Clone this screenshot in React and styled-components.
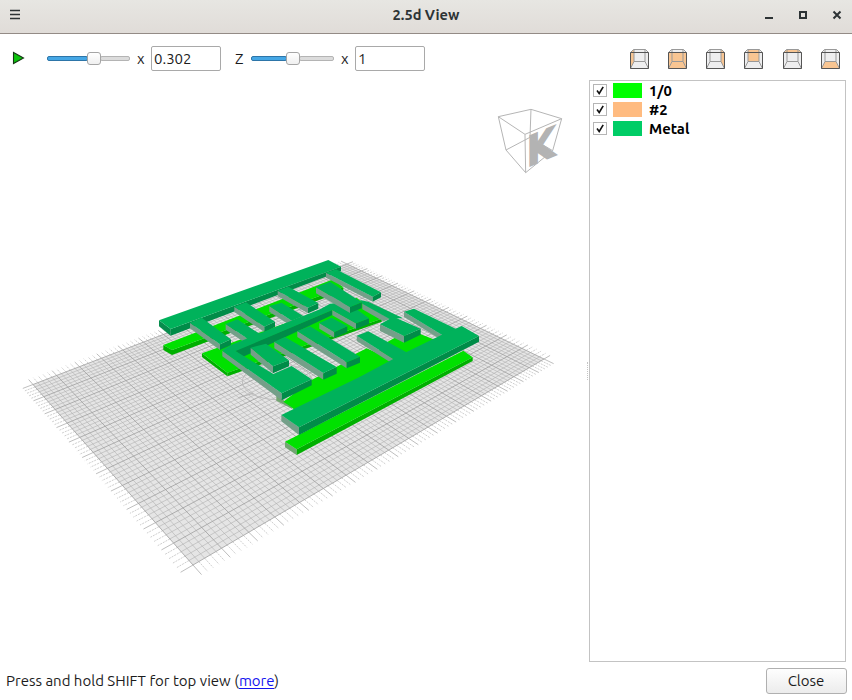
import React from "react";
import styled, { createGlobalStyle } from "styled-components";

const GlobalStyle = createGlobalStyle`
  * { box-sizing: border-box; }
  body { margin: 0; background: #fff; }
`;

const Window = styled.div`
  width: 852px;
  height: 700px;
  display: flex;
  flex-direction: column;
  background: #fff;
  color: #1c1c1c;
  font: 15px/20px Ubuntu, "Noto Sans", sans-serif;
  overflow: hidden;
`;

const TitleBar = styled.header`
  height: 34px;
  flex: none;
  display: grid;
  grid-template-columns: 120px 1fr 120px;
  align-items: center;
  padding: 0 9px 3px;
  background: linear-gradient(#e7e6e2, #e0dcd8);
  border-bottom: 1px solid #938b86;
`;

const Title = styled.h1`
  margin: 0;
  text-align: center;
  font-size: 14.6px;
  line-height: 20px;
  font-weight: 600;
  color: #2d3335;
`;

const WindowButtons = styled.div`
  display: flex;
  justify-content: flex-end;
  gap: 22px;
`;

const Glyph = styled.svg`
  display: block;
  flex: none;
`;

const Toolbar = styled.div`
  height: 46px;
  flex: none;
  display: flex;
  align-items: center;
  padding: 2px 11px 0 12px;
`;

const Slider = styled.div`
  width: 83px;
  height: 14px;
  display: flex;
  align-items: center;
  margin-left: ${(p) => p.$gap}px;
`;

const Track = styled.div`
  height: 5px;
  border: 1px solid ${(p) => (p.$filled ? "#2d75a8" : "#b4b4b4")};
  background: ${(p) => (p.$filled ? "#45a7e5" : "#dcdcdc")};
  border-radius: 2px;
  ${(p) => (p.$filled ? `width: ${p.$size}px;` : "flex: 1;")}
`;

const Knob = styled.div`
  width: 14px;
  height: 13px;
  margin: 0 -1px;
  border: 1px solid #a5a5a5;
  border-radius: 3px;
  background: linear-gradient(#fff, #f0f0f0);
  z-index: 1;
`;

const Label = styled.span`
  margin-left: ${(p) => p.$gap}px;
  width: ${(p) => p.$size}px;
  padding-top: 1px;
`;

const Field = styled.input`
  width: 70px;
  height: 25px;
  padding: 1px 2px 0;
  border: 1px solid #a9a9a9;
  border-radius: 2px;
  background: #fff;
  font: 15px/20px Ubuntu, "Noto Sans", sans-serif;
  color: #1c1c1c;
  outline: none;
`;

const ViewButtons = styled.div`
  display: flex;
  gap: 18.3px;
  margin-left: auto;
  padding-top: 2px;
`;

const Body = styled.main`
  flex: 1;
  min-height: 0;
  display: flex;
`;

const Splitter = styled.div`
  width: 3px;
  display: flex;
  align-items: center;
  padding-left: 1px;
  &::before {
    content: "";
    height: 18px;
    border-left: 1px dotted #c4c4c4;
  }
`;

const LayerList = styled.ul`
  width: 257px;
  margin: 0;
  padding: 0 3px;
  list-style: none;
  border: 1px solid #c3c3c3;
`;

const LayerRow = styled.li`
  height: 19px;
  display: flex;
  align-items: center;
  font-size: 14.8px;
  line-height: 19px;
  font-weight: 700;
  color: #000;
`;

const Check = styled.span`
  width: 14px;
  height: 13px;
  border: 1px solid #b5b5b5;
  background: #fff;
`;

const Swatch = styled.span`
  width: 29px;
  height: 15px;
  margin: 0 7px 0 6px;
  background: ${(p) => p.$color};
`;

const Footer = styled.footer`
  height: 38px;
  flex: none;
  display: flex;
  align-items: center;
  justify-content: space-between;
  padding: 0 5px 0 6px;
`;

const Hint = styled.span`
  a { color: #1414ef; text-underline-offset: 2px; text-decoration-thickness: 1px; }
`;

const CloseButton = styled.button`
  width: 81px;
  height: 26px;
  padding: 0 1px 0 0;
  border: 1px solid #b0b0b0;
  border-radius: 3px;
  background: linear-gradient(#fefefe, #ececec);
  font: 15px/20px Ubuntu, "Noto Sans", sans-serif;
  color: #1c1c1c;
`;

/* Faces of the small cube icons */
const FACES = {
  left: "0.5,3.5 4,0.5 4,12.5 0.5,19.5",
  front: "0.5,3.5 18.5,3.5 18.5,19.5 0.5,19.5",
  right: "18.5,3.5 15,0.5 15,12.5 18.5,19.5",
  back: "4,0.5 15,0.5 15,12.5 4,12.5",
  top: "0.5,3.5 4,0.5 15,0.5 18.5,3.5",
  bottom: "0.5,19.5 4,12.5 15,12.5 18.5,19.5",
};

function CubeIcon({ face }) {
  return (
    <Glyph width="20" height="21" viewBox="0 0 20 21">
      <path d="M.5 3.5 3.5.5h12l3 3v16H.5z" fill="#eeeeef" />
      <polygon points={FACES[face]} fill="#f8c592" />
      <path d="M.5 3.5 3.5.5h12l3 3M4 .5v12h11V.5M4 12.5l-3.5 7M15 12.5l3.5 7" fill="none" stroke="#999" />
      <path d="M.5 3.5h18v16H.5z" fill="none" stroke="#555" />
    </Glyph>
  );
}

/* Perspective map of the unit square onto the ground plane */
const CORNERS = [[33, 384.5], [347, 264], [544, 359], [193, 565]];
const project = (() => {
  const [[x0, y0], [x1, y1], [x2, y2], [x3, y3]] = CORNERS;
  const dx1 = x1 - x2, dx2 = x3 - x2, sx = x0 - x1 + x2 - x3;
  const dy1 = y1 - y2, dy2 = y3 - y2, sy = y0 - y1 + y2 - y3;
  const det = dx1 * dy2 - dx2 * dy1;
  const g = (sx * dy2 - dx2 * sy) / det;
  const h = (dx1 * sy - sx * dy1) / det;
  return (u, v) => {
    const w = g * u + h * v + 1;
    return [
      ((x1 - x0 + g * x1) * u + (x3 - x0 + h * x3) * v + x0) / w,
      ((y1 - y0 + g * y1) * u + (y3 - y0 + h * y3) * v + y0) / w,
    ];
  };
})();

const COLS = 85;
const ROWS = 55;
const segment = (a, b) => `M${project(...a).map((n) => n.toFixed(2))}L${project(...b).map((n) => n.toFixed(2))}`;

function gridPaths() {
  const out = { minor: "", major: "", minorTick: "", majorTick: "" };
  const ou = 2.1 / COLS;
  const ov = 2.1 / ROWS;
  for (let i = 0; i <= COLS; i++) {
    const u = i / COLS;
    const kind = i % 5 ? "minor" : "major";
    out[kind] += segment([u, 0], [u, 1]);
    out[kind + "Tick"] += segment([u, 0], [u, -ov]) + segment([u, 1], [u, 1 + ov]);
  }
  for (let j = 0; j <= ROWS; j++) {
    const v = j / ROWS;
    const kind = j % 5 ? "minor" : "major";
    out[kind] += segment([0, v], [1, v]);
    out[kind + "Tick"] += segment([0, v], [-ou, v]) + segment([1, v], [1 + ou, v]);
  }
  return out;
}
const GRID = gridPaths();

function Ground() {
  return (
    <g fill="none">
      <polygon points={CORNERS.join(" ")} fill="#e5e5e5" />
      <path d={GRID.minor} stroke="#b0b0b0" strokeWidth="0.6" />
      <path d={GRID.major} stroke="#9e9e9e" strokeWidth="0.8" />
      <path d={GRID.minorTick} stroke="#b4b4b4" strokeWidth="0.65" strokeDasharray="2 1" />
      <path d={GRID.majorTick} stroke="#a8a8a8" strokeWidth="0.75" />
    </g>
  );
}

const TOP = "#00b25b";
const SHADE = "#008c48";
const GRAY = "#749f89";

/* Prism given by its top face: left, back, right and front corner */
function Block({ at, h, top = TOP, left = GRAY, front = SHADE, h2 = h }) {
  const [l, , r, f] = at;
  const drop = ([x, y], d) => [x, y + d];
  return (
    <>
      <polygon points={[l, f, drop(f, h), drop(l, h)].join(" ")} fill={left} />
      <polygon points={[f, r, drop(r, h2), drop(f, h)].join(" ")} fill={front} />
      <polygon points={at.join(" ")} fill={top} />
    </>
  );
}

const GREEN = { top: "#00e100", front: "#00b000", left: "#72a572" };

function Circuit() {
  return (
    <g transform="scale(0.333333)">
      <ellipse cx="832" cy="1145" rx="105" ry="54" fill="none" stroke="#bcbcbc" strokeWidth="3" />
      <path d="M715 1193 760 1180" stroke="#b5b5b5" strokeWidth="3" />

      <Block {...GREEN} left="#00b000" at={[[490, 1035], [1000, 838], [1030, 862], [516, 1050]]} h={15} h2={11} />
      <Block {...GREEN} left="#00b000" at={[[606, 1060], [1070, 893], [1145, 956], [682, 1118]]} h={11} h2={9} />
      <polygon points="829,1187 877,1217 877,1227 829,1202" fill={GREEN.left} />
      <polygon
        points="850,1205 935,1140 1020,1095 1070,1060 1100,1045 1130,1058 1155,1030 1190,1010 1255,1000 1312,1022 1312,1045 890,1235 875,1222"
        fill={GREEN.top}
      />
      <Block {...GREEN} at={[[855, 1325], [1390, 1052], [1418, 1072], [890, 1348]]} h={17} h2={11} />

      <polygon points="512,987 1023,800 1023,813 512,1007" fill={SHADE} />
      <polygon points="477,961 512,987 512,1007 477,979" fill="#078c4d" />
      <Block at={[[677, 972], [712, 958], [780, 1002], [745, 1018]]} h={17} />
      <Block at={[[808, 918], [845, 908], [910, 948], [875, 962]]} h={17} />
      <Block at={[[570, 968], [605, 953], [693, 1018], [660, 1033]]} h={17} />
      <Block at={[[703, 920], [738, 907], [825, 965], [793, 980]]} h={16} />
      <Block at={[[833, 872], [865, 860], [955, 909], [924, 923]]} h={17} />
      <Block at={[[978, 818], [1008, 808], [1143, 877], [1118, 890]]} h={15} />
      <polygon points="477,961 985,780 1023,800 512,987" fill={TOP} />

      <polygon points="1087,908 1170,957 1150,964 1087,928" fill={GRAY} />
      <polygon points="1080,900 1105,905 1208,954 1170,958 1087,911" fill={TOP} />

      <polygon points="705,1052 997,930 997,945 730,1070" fill={SHADE} />
      <polygon points="997,930 1068,970 1068,987 997,946" fill={GRAY} />
      <polygon points="1068,970 1107,955 1107,972 1068,987" fill={SHADE} />
      <polygon points="667,1050 695,1034 960,928 990,911 1040,906 1107,955 1068,970 997,930 705,1054 680,1062" fill={TOP} />
      <Block at={[[948, 862], [990, 845], [1085, 907], [1050, 921]]} h={18} />

      <Block at={[[958, 969], [995, 953], [1042, 979], [1003, 996]]} h={17} />
      <Block at={[[892, 993], [930, 979], [1080, 1070], [1040, 1087]]} h={18} />
      <Block at={[[823, 1025], [855, 1011], [1010, 1101], [970, 1119]]} h={20} />

      <polygon points="667,1052 845,1180 845,1201 667,1069" fill={GRAY} />
      <polygon points="845,1180 935,1138 935,1156 845,1201" fill={SHADE} />
      <polygon points="667,1052 705,1052 820,1122 875,1098 935,1138 845,1180" fill={TOP} />
      <Block at={[[752, 1043], [798, 1031], [867, 1081], [819, 1099]]} h={21} h2={18} />

      <Block at={[[1140, 973], [1180, 950], [1262, 986], [1212, 1008]]} h={20} h2={18} />
      <Block at={[[1212, 935], [1242, 926], [1375, 990], [1335, 1010]]} h={16} />
      <Block at={[[1070, 1007], [1105, 994], [1225, 1060], [1185, 1080]]} h={16} />
      <polygon points="844,1245 897,1282 897,1305 844,1264" fill={GRAY} />
      <polygon points="897,1282 1437,1008 1437,1025 897,1305" fill={SHADE} />
      <polygon points="844,1245 1080,1130 1215,1058 1335,1000 1365,987 1385,978 1437,1008 897,1282" fill={TOP} />
    </g>
  );
}

function OrientationCube() {
  return (
    <g transform="translate(490 100) scale(0.333333)" fill="none" stroke="#b5b5b5" strokeWidth="3">
      <text
        transform="matrix(1 -0.42 0 1 111 201)"
        fontFamily="DejaVu Sans"
        fontWeight="700"
        fontSize="122"
        textLength="83"
        lengthAdjust="spacingAndGlyphs"
        fill="#b3b3b3"
        stroke="#b3b3b3"
        strokeWidth="6"
      >
        K
      </text>
      <path d="M25 50 123 28 215 56 105 103zM25 50 48 150 107 218 188 152 215 56M105 103 107 218M123 28 120 112 48 150M120 112 188 152" />
    </g>
  );
}

const LAYERS = [
  { name: "1/0", color: "#00ff00" },
  { name: "#2", color: "#ffbb80" },
  { name: "Metal", color: "#00cd66" },
];

export default function App() {
  return (
    <>
      <GlobalStyle />
      <Window>
        <TitleBar>
          <Glyph width="12" height="12" viewBox="0 0 12 12">
            <path d="M1 1.5h10M1 5.5h10M1 9.5h10" stroke="#2d3335" strokeWidth="1.5" />
          </Glyph>
          <Title>2.5d View</Title>
          <WindowButtons>
            <Glyph width="12" height="12" viewBox="0 0 12 12"><path d="M2 9h8" stroke="#2d3335" strokeWidth="2" /></Glyph>
            <Glyph width="12" height="12" viewBox="0 0 12 12"><path d="M3 3h6v6H3z" fill="none" stroke="#2d3335" strokeWidth="2" /></Glyph>
            <Glyph width="12" height="12" viewBox="0 0 12 12"><path d="m2.5 2.5 7 7m0-7-7 7" stroke="#2d3335" strokeWidth="2" /></Glyph>
          </WindowButtons>
        </TitleBar>
        <Toolbar>
          <Glyph width="13" height="14" viewBox="0 0 13 14">
            <path d="M1.5 1.5v11l10-5.5z" fill="#0bc30b" stroke="#153815" strokeWidth="1.1" />
          </Glyph>
          <Slider $gap={22}>
            <Track $filled $size={41} /><Knob /><Track />
          </Slider>
          <Label $gap={7} $size={14}>x</Label>
          <Field defaultValue="0.302" />
          <Label $gap={14} $size={16}>Z</Label>
          <Slider $gap={0}>
            <Track $filled $size={36} /><Knob /><Track />
          </Slider>
          <Label $gap={7} $size={14}>x</Label>
          <Field defaultValue="1" />
          <ViewButtons>
            {["left", "front", "right", "back", "top", "bottom"].map((face) => (
              <CubeIcon key={face} face={face} />
            ))}
          </ViewButtons>
        </Toolbar>
        <Body>
          <Glyph width="586" height="582" viewBox="0 80 586 582">
            <Ground />
            <Circuit />
            <OrientationCube />
          </Glyph>
          <Splitter />
          <LayerList>
            {LAYERS.map(({ name, color }) => (
              <LayerRow key={name}>
                <Check>
                  <Glyph width="12" height="11" viewBox="0 0 12 11">
                    <path d="m3 5.5 2.2 3 4-6.7" fill="none" stroke="#111" strokeWidth="1.6" />
                  </Glyph>
                </Check>
                <Swatch $color={color} />
                {name}
              </LayerRow>
            ))}
          </LayerList>
        </Body>
        <Footer>
          <Hint>Press and hold SHIFT for top view (<a href="#more">more</a>)</Hint>
          <CloseButton>Close</CloseButton>
        </Footer>
      </Window>
    </>
  );
}
